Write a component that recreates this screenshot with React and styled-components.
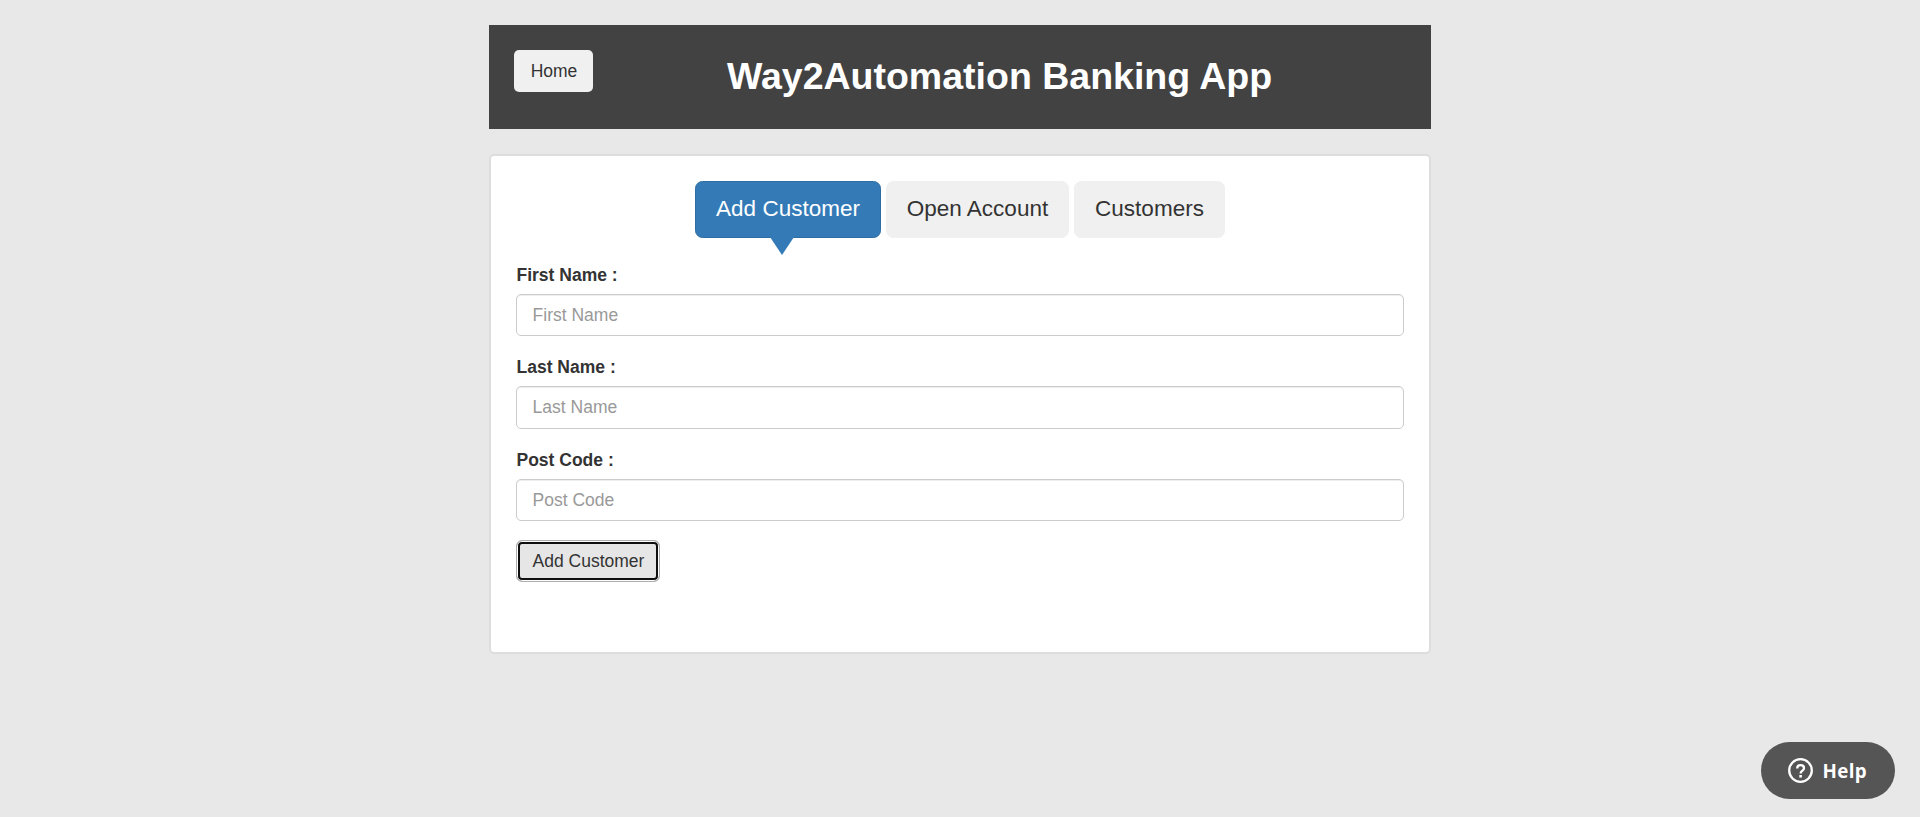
import React from "react";
import styled, { createGlobalStyle } from "styled-components";

const GlobalStyle = createGlobalStyle`
  *, *::before, *::after { box-sizing: border-box; }
  html, body { margin: 0; min-height: 100%; background: #e8e8e8; }
  body {
    font-family: "Liberation Sans", Arial, sans-serif;
    font-size: 17.5px;
    line-height: 25px;
    color: #333;
    overflow: hidden;
  }
  button, input { font: inherit; color: inherit; margin: 0; }
`;

const Page = styled.main`
  width: 942px;
  margin: 0 auto;
  padding-top: 25px;
  display: flex;
  flex-direction: column;
  gap: 25px;
`;

const Header = styled.header`
  display: flex;
  align-items: flex-start;
  height: 104px;
  padding: 25px;
  background: #424242;
`;

const HomeButton = styled.button`
  width: 79px;
  height: 42px;
  padding: 0 0 0 1px;
  border: 0;
  border-radius: 5px;
  background: #f0f0f0;
`;

const Title = styled.h1`
  flex: 1;
  margin: 0;
  color: #fff;
  font-size: 37.5px;
  line-height: 53px;
  font-weight: 700;
  text-align: center;
`;

const Card = styled.section`
  height: 500px;
  padding: 25px;
  background: #fff;
  border: 2px solid #ddd;
  border-radius: 5px;
`;

const Tabs = styled.nav`
  display: flex;
  justify-content: center;
  gap: 5px;
  margin-bottom: 24.6px;
`;

const Tab = styled.button`
  position: relative;
  width: ${(p) => p.$width}px;
  height: 57px;
  padding: 0 0 2px;
  border: 1px solid ${(p) => (p.$active ? "#2e6da4" : "#f0f0f0")};
  border-radius: 7.5px;
  background: ${(p) => (p.$active ? "#337ab7" : "#f0f0f0")};
  color: ${(p) => (p.$active ? "#fff" : "#333")};
  font-size: 22.5px;
  line-height: 30px;
  white-space: nowrap;
`;

const TabArrow = styled.span`
  position: absolute;
  top: 100%;
  left: 74px;
  border: solid transparent;
  border-width: 18px 12px 0;
  border-top-color: #337ab7;
`;

const Form = styled.form`
  display: flex;
  flex-direction: column;
  align-items: flex-start;
  gap: 18.75px;
`;

const Field = styled.div`
  width: 100%;
  display: flex;
  flex-direction: column;
  gap: 6.25px;
`;

const Label = styled.label`
  padding-left: 0.5px;
  font-weight: 700;
`;

const Input = styled.input`
  width: 100%;
  height: 42.5px;
  padding: 7px 15.6px;
  border: 1px solid #ccc;
  border-radius: 5px;
  background: #fff;
  box-shadow: inset 0 1px 1px rgba(0, 0, 0, 0.075);
  &::placeholder { color: #999; opacity: 1; }
`;

const SubmitButton = styled.button`
  width: 144px;
  height: 42px;
  padding: 1px 0 0 1px;
  border: 1px solid #adadad;
  border-radius: 6px;
  background: #e6e6e6;
  box-shadow: inset 0 0 0 1px #fff, inset 0 0 0 3px #101010;
`;

const HelpButton = styled.button`
  position: fixed;
  right: 25px;
  bottom: 18px;
  display: flex;
  align-items: center;
  gap: 9.5px;
  width: 134px;
  height: 57px;
  padding: 0 0 0 27px;
  border: 0;
  border-radius: 29px;
  background: #555;
  color: #fff;
  font-family: "Open Sans", "Noto Sans", sans-serif;
  font-size: 18.75px;
  font-weight: 700;
  letter-spacing: 0.4px;
`;

const fields = ["First Name", "Last Name", "Post Code"];
const tabs = [
  { label: "Add Customer", width: 186, active: true },
  { label: "Open Account", width: 183 },
  { label: "Customers", width: 151 },
];

function HelpIcon() {
  return (
    <svg width="25" height="25" viewBox="0 0 25 25" fill="none" stroke="#fff" strokeWidth="2.3">
      <circle cx="12.5" cy="12.5" r="11.3" />
      <path d="M9.2 10.4c0-2 1.4-3.2 3.4-3.2s3.4 1.2 3.4 3c0 2.5-3.4 2.4-3.4 5.2" />
      <path d="M12.6 17v2.6" strokeWidth="2.6" />
    </svg>
  );
}

export default function App() {
  return (
    <>
      <GlobalStyle />
      <Page>
        <Header>
          <HomeButton>Home</HomeButton>
          <Title>Way2Automation Banking App</Title>
        </Header>
        <Card>
          <Tabs>
            {tabs.map((t) => (
              <Tab key={t.label} $width={t.width} $active={t.active}>
                {t.label}
                {t.active && <TabArrow />}
              </Tab>
            ))}
          </Tabs>
          <Form onSubmit={(e) => e.preventDefault()}>
            {fields.map((name) => (
              <Field key={name}>
                <Label htmlFor={name}>{name} :</Label>
                <Input id={name} placeholder={name} />
              </Field>
            ))}
            <SubmitButton type="submit">Add Customer</SubmitButton>
          </Form>
        </Card>
      </Page>
      <HelpButton>
        <HelpIcon />
        Help
      </HelpButton>
    </>
  );
}
